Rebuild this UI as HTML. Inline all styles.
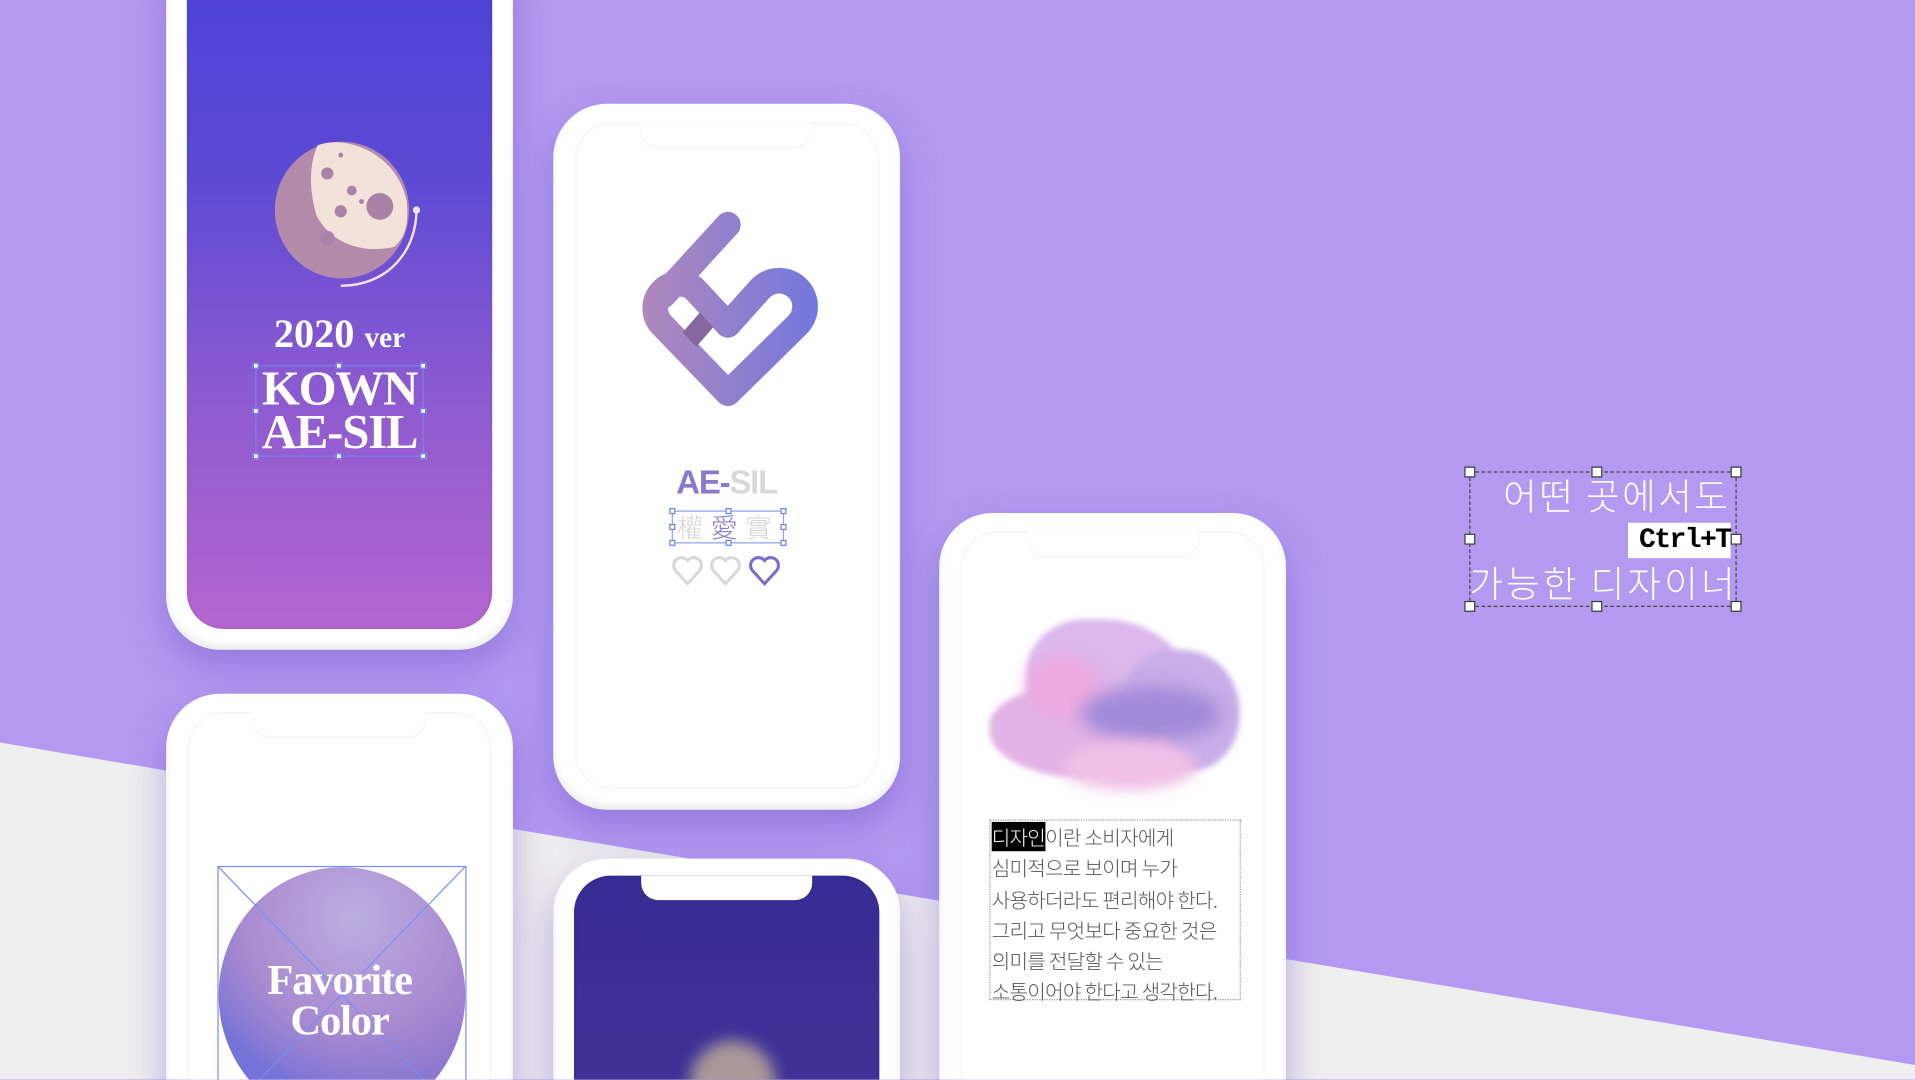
<!DOCTYPE html>
<html><head><meta charset="utf-8"><style>
html,body{margin:0;padding:0;width:1915px;height:1080px;overflow:hidden;background:#b39af0}
#w{position:absolute;left:0;top:0;width:1568px;height:884px;transform:scale(1.22130);transform-origin:0 0;overflow:hidden;background:#b39af0;font-family:"Liberation Sans","Noto Sans CJK KR",sans-serif}
.ph{position:absolute;background:#fff;border-radius:44px;box-shadow:0 14px 30px rgba(110,80,200,.45),inset 0 -4px 6px rgba(0,0,0,.08);overflow:hidden}
.scr{position:absolute;left:17px;right:17px;top:15px;bottom:17px;border-radius:30px;box-shadow:inset 0 0 4px rgba(0,0,0,.08);overflow:hidden;background:#fff}
.notch{position:absolute;left:55px;right:55px;top:0;height:20px;background:#fff;border-radius:0 0 14px 14px;box-shadow:0 1px 2px rgba(0,0,0,.05)}
.serif{font-family:"Liberation Serif",serif;font-weight:bold;color:#fff}
.h{position:absolute;width:5px;height:5px;background:#fff;border:1px solid #6a7ef0;box-sizing:border-box}
.hk{position:absolute;width:9px;height:9px;background:#fff;border:1px solid #333;box-sizing:border-box}
</style></head><body><div id="w">
<svg style="position:absolute;left:0;top:0" width="1568" height="884"><polygon points="0,608 1568,872 1568,884 0,884" fill="#efefef"/></svg>

<!-- phone 1 -->
<div class="ph" style="left:136px;top:-60px;width:284px;height:592px">
 <div class="scr" style="background:linear-gradient(#4a3fd8 0%,#5c4ad4 35%,#8a5ad0 65%,#b566d0 100%);top:0;">
  <svg style="position:absolute;left:70px;top:170px" width="140" height="140">
   <ellipse cx="57" cy="62" rx="55" ry="56" fill="#b48aab"/>
   <path d="M37,9 C60,0 102,15 110,55 C112,75 108,85 100,92 C75,98 48,90 36,66 C30,45 30,25 37,9Z" fill="#f3e2da"/>
   <circle cx="45" cy="32" r="5" fill="#a983a7"/><circle cx="65" cy="46" r="4" fill="#a983a7"/><circle cx="56" cy="63" r="5" fill="#a983a7"/><circle cx="88" cy="59" r="11" fill="#a983a7"/><circle cx="45" cy="85" r="6" fill="#a983a7"/><circle cx="56" cy="17" r="2" fill="#a983a7"/><circle cx="73" cy="55" r="2" fill="#a983a7"/>
   <path d="M118,62 C118,95 95,124 56,124" stroke="#f3e2da" stroke-width="2" fill="none"/><circle cx="118" cy="62" r="3" fill="#f3e2da"/>
  </svg>
  <div class="serif" style="position:absolute;left:0;right:0;top:316px;text-align:center;font-size:33px">2020 <span style="font-size:24px">ver</span></div>
  <div class="serif" style="position:absolute;left:56px;top:359px;width:138px;height:75px;border:1px solid #7a80f0;box-sizing:border-box;text-align:center;font-size:40px;line-height:36px;letter-spacing:-1px">KOWN<br>AE-SIL</div>
  <div class="h" style="left:54px;top:357px"></div><div class="h" style="left:122px;top:357px"></div><div class="h" style="left:191px;top:357px"></div><div class="h" style="left:54px;top:394px"></div><div class="h" style="left:191px;top:394px"></div><div class="h" style="left:54px;top:431px"></div><div class="h" style="left:122px;top:431px"></div><div class="h" style="left:191px;top:431px"></div>
 </div>
</div>

<!-- phone 2 -->
<div class="ph" style="left:453px;top:85px;width:284px;height:578px">
 <div class="scr"><div class="notch"></div>
  <div style="position:absolute;left:0;right:0;top:280px;text-align:center;font-size:27px;font-weight:bold;letter-spacing:-1px"><span style="color:#8a78cf">AE-</span><span style="color:#d8d8d8">SIL</span></div>
  <div style="position:absolute;left:80px;top:318px;width:92px;height:27px;border:1px solid #8fa0f5;box-sizing:border-box;font-family:'Noto Sans CJK TC',sans-serif;font-weight:300;font-size:22px;line-height:25px;text-align:center;color:#d6d6d6;letter-spacing:6px">權<span style="color:#8a78cf">愛</span>實</div>
  <div class="h" style="left:78px;top:316px"></div><div class="h" style="left:124px;top:316px"></div><div class="h" style="left:169px;top:316px"></div><div class="h" style="left:78px;top:329px"></div><div class="h" style="left:169px;top:329px"></div><div class="h" style="left:78px;top:342px"></div><div class="h" style="left:124px;top:342px"></div><div class="h" style="left:169px;top:342px"></div>
  <svg style="position:absolute;left:80px;top:354px" width="100" height="30">
   <g fill="none" stroke-width="2.5"><path d="M13,24 L3,13 A6,6 0 0 1 13,5 A6,6 0 0 1 23,13Z" stroke="#d8d8d8"/><path d="M44,24 L34,13 A6,6 0 0 1 44,5 A6,6 0 0 1 54,13Z" stroke="#d8d8d8"/><path d="M76,24 L66,13 A6,6 0 0 1 76,5 A6,6 0 0 1 86,13Z" stroke="#7f6ad0"/></g>
  </svg>
 </div>
</div>
<svg style="position:absolute;left:0;top:0" width="1568" height="884">
 <defs><linearGradient id="g1" gradientUnits="userSpaceOnUse" x1="525" y1="0" x2="668" y2="0"><stop offset="0" stop-color="#b088bc"/><stop offset="1" stop-color="#7478dc"/></linearGradient></defs>
 <g stroke="url(#g1)" stroke-width="21" fill="none" stroke-linecap="round" stroke-linejoin="round">
  <path d="M596,184 L543,242"/>
  <path d="M596,322 L541,265 A20,20 0 0 1 568,236 L596,266 L623,236 A21,21 0 0 1 653,266 Z"/>
 </g>
 <path d="M573,256 L584,268 L570,284 L559,272Z" fill="#85689e"/>
</svg>

<!-- phone 3 -->
<div class="ph" style="left:136px;top:568px;width:284px;height:400px">
 <div class="scr"><div class="notch"></div>
  <div style="position:absolute;left:26px;top:127px;width:202px;height:210px;border-radius:50%;background:radial-gradient(circle at 55% 20%,#bcaee0 0%,#a88ad0 45%,transparent 70%),linear-gradient(45deg,#6a70de 0%,#8a78cf 50%,#a07cc4 100%)"></div>
  <svg style="position:absolute;left:24px;top:125px" width="210" height="200"><g stroke="#7a8cf5" fill="none" stroke-width="1"><rect x="1.5" y="1.5" width="203" height="210"/><line x1="1.5" y1="1.5" x2="204" y2="211"/><line x1="204" y1="1.5" x2="1.5" y2="211"/></g></svg>
  <div class="serif" style="position:absolute;left:0;right:0;top:203px;text-align:center;font-size:35px;line-height:33px;letter-spacing:-1px">Favorite<br>Color</div>
 </div>
</div>

<!-- phone 4 -->
<div class="ph" style="left:453px;top:703px;width:284px;height:300px">
 <div class="scr" style="top:14px;background:linear-gradient(#372c95,#453698)"><div class="notch"></div>
  <div style="position:absolute;left:95px;top:135px;width:70px;height:70px;border-radius:50%;background:#a89898;filter:blur(6px)"></div>
 </div>
</div>

<!-- phone 5 -->
<div class="ph" style="left:769px;top:420px;width:284px;height:580px">
 <div class="scr"><div class="notch"></div>
  <div style="position:absolute;left:24px;top:72px;width:212px;height:150px;filter:blur(2.5px)">
   <div style="position:absolute;left:30px;top:0;width:140px;height:125px;border-radius:35% 55% 40% 50%;background:#dcb8ec"></div>
   <div style="position:absolute;left:110px;top:25px;width:95px;height:100px;border-radius:40% 50% 45% 40%;background:#c9aee8"></div>
   <div style="position:absolute;left:0;top:55px;width:150px;height:75px;border-radius:45% 40% 50% 55%;background:#e3b2e6"></div>
   <div style="position:absolute;left:30px;top:30px;width:60px;height:50px;border-radius:50%;background:#efaadf;filter:blur(6px)"></div>
   <div style="position:absolute;left:75px;top:55px;width:115px;height:45px;border-radius:50%;background:#9f8ad8;filter:blur(7px)"></div>
   <div style="position:absolute;left:60px;top:100px;width:110px;height:40px;border-radius:50%;background:#f0c0e6;filter:blur(5px)"></div>
  </div>
  <div style="position:absolute;left:24px;top:236px;width:206px;height:148px;border:1px dotted #999;box-sizing:border-box"></div>
  <div style="position:absolute;left:26px;top:238px;font-size:16.5px;line-height:25.3px;color:#555;white-space:nowrap;letter-spacing:-0.6px;font-family:'Noto Sans CJK KR',sans-serif;font-weight:300"><span style="background:#000;color:#fff">디자인</span>이란 소비자에게<br>심미적으로 보이며 누가<br>사용하더라도 편리해야 한다.<br>그리고 무엇보다 중요한 것은<br>의미를 전달할 수 있는<br>소통이어야 한다고 생각한다.</div>
 </div>
</div>

<!-- right text -->
<div style="position:absolute;left:1203px;top:386px;width:219px;height:111px;border:1px dashed #444;box-sizing:border-box"></div>
<div style="position:absolute;left:1180px;top:386px;width:237px;text-align:right;color:#fff;font-size:30px;line-height:37px;letter-spacing:2px;font-family:'Noto Sans CJK KR',sans-serif;font-weight:300">어떤 곳에서도</div>
<div style="position:absolute;left:1333px;top:428px;width:84px;height:29px;background:#fff;color:#000;font-family:'Liberation Mono',monospace;font-weight:bold;font-size:23px;line-height:29px;text-align:right;letter-spacing:-1.3px">Ctrl+T</div>
<div style="position:absolute;left:1203px;top:458px;color:#fff;font-size:30px;line-height:37px;letter-spacing:2.5px;font-family:'Noto Sans CJK KR',sans-serif;font-weight:300;white-space:nowrap">가능한 디자이너</div>
<div class="hk" style="left:1199px;top:382px"></div><div class="hk" style="left:1303px;top:382px"></div><div class="hk" style="left:1417px;top:382px"></div><div class="hk" style="left:1199px;top:437px"></div><div class="hk" style="left:1417px;top:437px"></div><div class="hk" style="left:1199px;top:492px"></div><div class="hk" style="left:1303px;top:492px"></div><div class="hk" style="left:1417px;top:492px"></div>
</div></body></html>
